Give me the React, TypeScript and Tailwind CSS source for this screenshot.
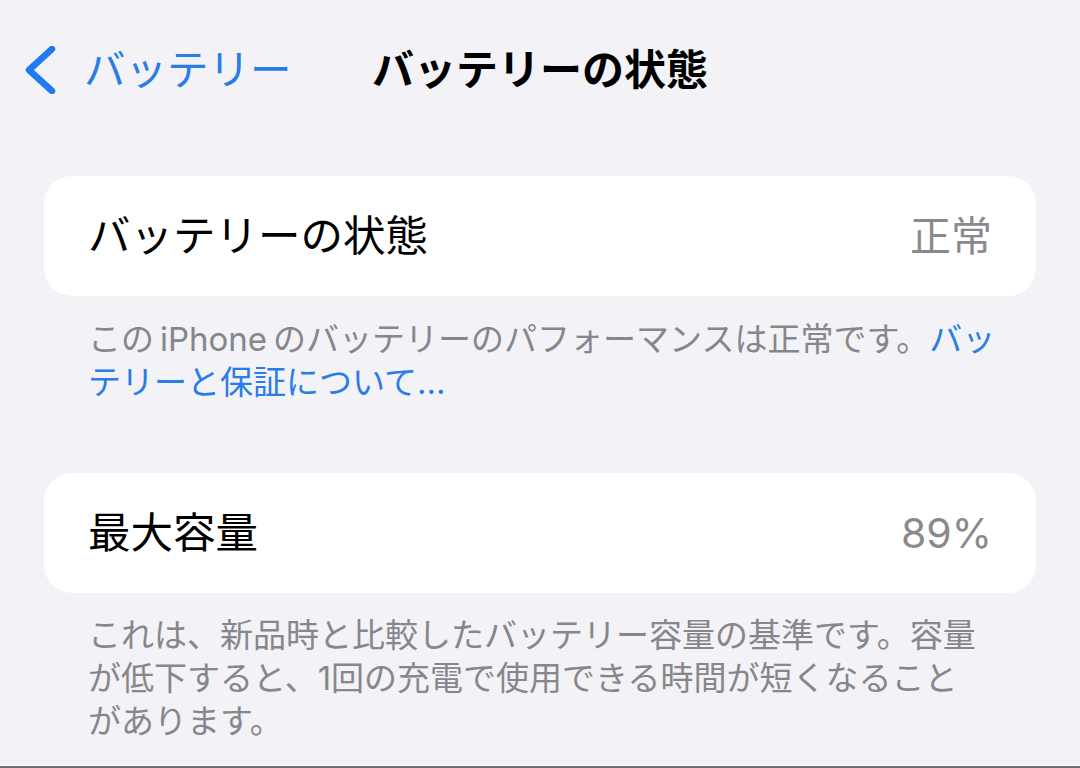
import React from 'react';

const jp = "font-['Inter','Noto_Sans_CJK_JP',sans-serif]";

function Row({ label, value }: { label: string; value: string }) {
  return (
    <div className="mx-[44px] flex h-[120px] items-center justify-between rounded-[28px] bg-white pl-[44px] pr-[44px]">
      <span className="text-[42.5px] leading-none text-black">{label}</span>
      <span className="text-[41px] leading-none text-[#8a8a8e]">{value}</span>
    </div>
  );
}

function Footnote({ lines }: { lines: React.ReactNode[] }) {
  return (
    <div className="px-[88px] text-[33px] leading-[43px] text-[#86868b]">
      {lines.map((l, i) => (
        <div key={i} className="whitespace-nowrap">
          {l}
        </div>
      ))}
    </div>
  );
}

export default function App() {
  return (
    <div className={`${jp} flex h-[768px] w-[1080px] flex-col overflow-hidden bg-[#f2f2f7]`}>
      {/* nav bar */}
      <div className="relative flex h-[140px] items-start pt-[46px]">
        <div className="flex items-center pl-[24px] text-[#2a7ce6]">
          <svg width="34" height="48" viewBox="0 0 34 48" className="mr-[26px]">
            <path d="M28 3 L5 24 L28 45" fill="none" stroke="#1e7bf0" strokeWidth="6.5" strokeLinecap="round" strokeLinejoin="round" />
          </svg>
          <span className="text-[41.5px] leading-[48px]">バッテリー</span>
        </div>
        <div className="absolute left-0 right-0 top-[46px] text-center text-[42px] font-bold leading-[48px] text-black">
          バッテリーの状態
        </div>
      </div>

      <div className="mt-[36px]">
        <Row label="バッテリーの状態" value="正常" />
      </div>
      <div className="mt-[22px]">
        <Footnote
          lines={[
            <>
              この{'\u2009'}iPhone{'\u2009'}のバッテリーのパフォーマンスは正常です。<span className="text-[#2a7ce6]">バッ</span>
            </>,
            <span className="text-[#2a7ce6]">テリーと保証について...</span>,
          ]}
        />
      </div>

      <div className="mt-[69px]">
        <Row label="最大容量" value="89%" />
      </div>
      <div className="mt-[21px]">
        <Footnote
          lines={[
            'これは、新品時と比較したバッテリー容量の基準です。容量',
            'が低下すると、1回の充電で使用できる時間が短くなること',
            'があります。',
          ]}
        />
      </div>

      <div className="mt-auto h-[3px] border-t border-white bg-[#6e6e73]" />
    </div>
  );
}
